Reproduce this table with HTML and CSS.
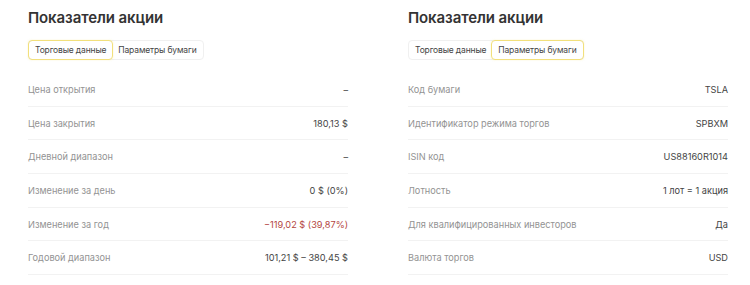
FILE: index.html
```html
<!DOCTYPE html>
<html lang="ru">
<head>
<meta charset="utf-8">
<link rel="stylesheet" href="styles.css">
</head>
<body>
<div class="page">
  <section class="panel">
    <h2 class="title">Показатели акции</h2>
    <div class="tabs">
      <div class="tab active">Торговые данные</div>
      <div class="tab">Параметры бумаги</div>
    </div>
    <div class="rows">
      <div class="row"><span class="label">Цена открытия</span><span class="value">–</span></div>
      <div class="row"><span class="label">Цена закрытия</span><span class="value">180,13 $</span></div>
      <div class="row"><span class="label">Дневной диапазон</span><span class="value">–</span></div>
      <div class="row"><span class="label">Изменение за день</span><span class="value">0 $ (0%)</span></div>
      <div class="row"><span class="label">Изменение за год</span><span class="value neg">−119,02 $ (39,87%)</span></div>
      <div class="row"><span class="label">Годовой диапазон</span><span class="value">101,21 $ – 380,45 $</span></div>
    </div>
  </section>
  <section class="panel">
    <h2 class="title">Показатели акции</h2>
    <div class="tabs">
      <div class="tab">Торговые данные</div>
      <div class="tab active">Параметры бумаги</div>
    </div>
    <div class="rows">
      <div class="row"><span class="label">Код бумаги</span><span class="value">TSLA</span></div>
      <div class="row"><span class="label">Идентификатор режима торгов</span><span class="value">SPBXM</span></div>
      <div class="row"><span class="label">ISIN код</span><span class="value">US88160R1014</span></div>
      <div class="row"><span class="label">Лотность</span><span class="value">1 лот = 1 акция</span></div>
      <div class="row"><span class="label">Для квалифицированных инвесторов</span><span class="value">Да</span></div>
      <div class="row"><span class="label">Валюта торгов</span><span class="value">USD</span></div>
    </div>
  </section>
</div>
</body>
</html>
```

FILE: styles.css
```css
* { box-sizing: border-box; }
html, body { margin: 0; padding: 0; background: #fff; }
body {
  font-family: Inter, "Noto Sans", sans-serif;
  color: #333;
  width: 750px;
  height: 285px;
  overflow: hidden;
}
.page {
  display: grid;
  grid-template-columns: 320px 320px;
  column-gap: 60px;
  padding: 8px 0 0 28px;
}
.panel { display: flex; flex-direction: column; }
.title {
  margin: 0;
  font-size: 15px;
  font-weight: 600;
  line-height: 20px;
  color: #333;
  letter-spacing: -0.1px;
}
.tabs {
  display: flex;
  align-self: flex-start;
  margin-top: 12px;
  border: 1px solid #f0f0f0;
  border-radius: 4px;
  height: 20px;
}
.tab {
  font-size: 8.5px;
  line-height: 18px;
  padding: 0 6px;
  letter-spacing: -0.15px;
  color: #444;
  white-space: nowrap;
  border: 1px solid transparent;
  margin: -1px;
  border-radius: 4px;
}
.tab.active {
  border-color: #f2e07c;
  box-shadow: 0 0 2px rgba(240, 220, 110, 0.35);
}
.rows { margin-top: 13px; display: flex; flex-direction: column; }
.row {
  display: flex;
  justify-content: space-between;
  align-items: center;
  height: 33.7px;
  border-bottom: 1px solid #f2f2f2;
  font-size: 9.2px;
}
.label { color: #939393; }
.value { color: #444; }
.value.neg { color: #b4463f; }
```
